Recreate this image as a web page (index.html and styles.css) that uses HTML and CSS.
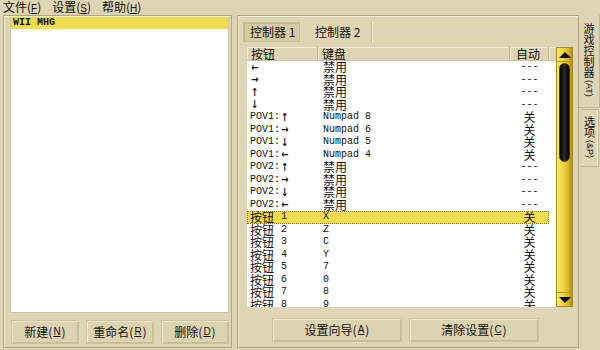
FILE: index.html
```html
<!DOCTYPE html>
<html lang="zh">
<head>
<meta charset="utf-8">
<title>控制器设置</title>
<link rel="stylesheet" href="styles.css">
</head>
<body>
<div class="app">
  <div class="menubar">
    <span class="menu">文件(<u>F</u>)</span>
    <span class="menu">设置(<u>S</u>)</span>
    <span class="menu">帮助(<u>H</u>)</span>
  </div>
  <div class="main">
    <div class="left">
      <div class="list">
        <div class="list-item sel">WII MHG</div>
      </div>
      <div class="btnrow left-btns">
        <div class="btn">新建(<u>N</u>)</div>
        <div class="btn">重命名(<u>R</u>)</div>
        <div class="btn">删除(<u>D</u>)</div>
      </div>
    </div>
    <div class="right">
      <div class="tabs">
        <div class="tab active">控制器 1</div>
        <div class="tab second">控制器 2</div>
      </div>
      <div class="grid-wrap">
        <div class="table">
          <div class="thead">
            <div class="th c1">按钮</div>
            <div class="th c2">键盘</div>
            <div class="th c3">自动</div>
            <div class="th c4"></div>
          </div>
          <div class="tbody">
            <div class="row"><span class="c1 m"><i class="ar">←</i></span><span class="c2">禁用</span><span class="c3 m">---</span></div>
            <div class="row"><span class="c1 m"><i class="ar">→</i></span><span class="c2">禁用</span><span class="c3 m">---</span></div>
            <div class="row"><span class="c1 m"><i class="ar">↑</i></span><span class="c2">禁用</span><span class="c3 m">---</span></div>
            <div class="row"><span class="c1 m"><i class="ar">↓</i></span><span class="c2">禁用</span><span class="c3 m">---</span></div>
            <div class="row"><span class="c1 m">POV1:<i class="ar">↑</i></span><span class="c2 m">Numpad 8</span><span class="c3">关</span></div>
            <div class="row"><span class="c1 m">POV1:<i class="ar">→</i></span><span class="c2 m">Numpad 6</span><span class="c3">关</span></div>
            <div class="row"><span class="c1 m">POV1:<i class="ar">↓</i></span><span class="c2 m">Numpad 5</span><span class="c3">关</span></div>
            <div class="row"><span class="c1 m">POV1:<i class="ar">←</i></span><span class="c2 m">Numpad 4</span><span class="c3">关</span></div>
            <div class="row"><span class="c1 m">POV2:<i class="ar">↑</i></span><span class="c2">禁用</span><span class="c3 m">---</span></div>
            <div class="row"><span class="c1 m">POV2:<i class="ar">→</i></span><span class="c2">禁用</span><span class="c3 m">---</span></div>
            <div class="row"><span class="c1 m">POV2:<i class="ar">↓</i></span><span class="c2">禁用</span><span class="c3 m">---</span></div>
            <div class="row"><span class="c1 m">POV2:<i class="ar">←</i></span><span class="c2">禁用</span><span class="c3 m">---</span></div>
            <div class="row sel"><span class="c1">按钮<i class="n">1</i></span><span class="c2 m">X</span><span class="c3">关</span></div>
            <div class="row"><span class="c1">按钮<i class="n">2</i></span><span class="c2 m">Z</span><span class="c3">关</span></div>
            <div class="row"><span class="c1">按钮<i class="n">3</i></span><span class="c2 m">C</span><span class="c3">关</span></div>
            <div class="row"><span class="c1">按钮<i class="n">4</i></span><span class="c2 m">Y</span><span class="c3">关</span></div>
            <div class="row"><span class="c1">按钮<i class="n">5</i></span><span class="c2 m">7</span><span class="c3">关</span></div>
            <div class="row"><span class="c1">按钮<i class="n">6</i></span><span class="c2 m">0</span><span class="c3">关</span></div>
            <div class="row"><span class="c1">按钮<i class="n">7</i></span><span class="c2 m">8</span><span class="c3">关</span></div>
            <div class="row"><span class="c1">按钮<i class="n">8</i></span><span class="c2 m">9</span><span class="c3">关</span></div>
          </div>
        </div>
        <div class="scrollbar">
          <div class="sb-btn"><span class="tri up"></span></div>
          <div class="sb-track">
            <div class="thumb"></div>
          </div>
          <div class="sb-btn"><span class="tri down"></span></div>
        </div>
      </div>
      <div class="btnrow right-btns">
        <div class="btn wide">设置向导(<u>A</u>)</div>
        <div class="btn wide">清除设置(<u>C</u>)</div>
      </div>
    </div>
    <div class="vtabs">
      <div class="vtab active"><span class="vt">游戏控制器<i class="vl">(AT)</i></span></div>
      <div class="vtab second"><span class="vt">选项<i class="vl">(&amp;P)</i></span></div>
    </div>
  </div>
</div>
</body>
</html>
```

FILE: styles.css
```css
* { box-sizing: border-box; }
html, body { margin: 0; padding: 0; }
body {
  width: 600px;
  height: 350px;
  overflow: hidden;
  background: #ddd5b3;
  font-family: "Noto Sans CJK SC", "DejaVu Sans", sans-serif;
  font-size: 12px;
  color: #111;
}
i { font-style: normal; }
u { text-decoration: underline; }
.app { width: 600px; height: 350px; display: flex; flex-direction: column; }

.menubar {
  height: 15px;
  display: flex;
  align-items: center;
  gap: 11px;
  padding-left: 3px;
  line-height: 15px;
  font-size: 12px;
}
.menu { white-space: nowrap; }
.menu u { font-family: "Liberation Sans", sans-serif; font-size: 10px; }

.main { flex: 1; display: flex; padding-left: 3px; padding-bottom: 2px; }

.left {
  width: 229px;
  border: 1px solid #b3a67c;
  box-shadow: inset 1px 1px 0 #f3eed8;
  display: flex;
  flex-direction: column;
  padding: 1px 2px 0 6px;
}
.list {
  height: 296px;
  background: #fff;
  border: 1px solid #cfc6a0;
  border-top: 0;
}
.list-item {
  height: 12px;
  line-height: 12px;
  padding-left: 2px;
  font-family: "Liberation Mono", monospace;
  font-size: 10px;
  font-weight: bold;
}
.list-item.sel { background: #f1db4f; }

.btnrow { display: flex; }
.left-btns { margin-top: 7px; gap: 7px; padding-left: 1px; }
.btn {
  height: 24px;
  display: flex;
  align-items: center;
  justify-content: center;
  line-height: 1;
  border: 1px solid #cdc39c;
  box-shadow: inset 1px 1px 0 #ece6cd, inset -1px -1px 0 #c8be96;
  background: #dcd4b0;
  font-size: 12px;
  width: 69px;
  white-space: nowrap;
}
.btn u { font-family: "Liberation Sans", sans-serif; font-size: 10px; margin: 0 1px; }
.btn.wide { width: 130px; }

.right {
  width: 342px;
  margin-left: 5px;
  border: 1px solid #b3a67c;
  box-shadow: inset 1px 1px 0 #f3eed8;
  display: flex;
  flex-direction: column;
  padding: 6px 0 0 5px;
}
.tabs { display: flex; height: 20px; }
.tab {
  display: flex;
  align-items: center;
  line-height: 1;
  font-size: 12px;
  white-space: nowrap;
}
.tab.active {
  width: 57px;
  padding-left: 6px;
  background: #d5cca6;
  border: 1px solid #c9bf96;
  box-shadow: inset 1px 1px 0 #bfb48a;
}
.tab.second {
  width: 72px;
  padding-left: 15px;
  border-right: 1px solid #c4b98e;
  box-shadow: 1px 0 0 #f1ecd6;
}

.grid-wrap {
  margin-top: 5px;
  margin-left: 4px;
  display: flex;
  height: 260px;
}
.table { width: 309px; display: flex; flex-direction: column; }
.thead {
  height: 14px;
  display: grid;
  grid-template-columns: 71px 192px 39px 7px;
  background: #ddd5b3;
}
.th {
  display: flex;
  align-items: center;
  line-height: 1;
  font-size: 12px;
  border-right: 1px solid #bdb189;
  border-bottom: 1px solid #cfc6a0;
  box-shadow: inset 1px 1px 0 #f1ecd6;
}
.th.c1 { padding-left: 4px; }
.th.c2 { padding-left: 4px; }
.th.c3 { padding-left: 6px; }
.th.c4 { border-right: 0; }
.tbody {
  flex: 1;
  background: #fff;
  overflow: hidden;
}
.row {
  height: 12.5px;
  display: grid;
  grid-template-columns: 71px 192px 39px;
  width: 302px;
  white-space: nowrap;
}
.row > span {
  display: flex;
  align-items: center;
  height: 12.5px;
  line-height: 1;
  white-space: pre;
}
.row.sel {
  background: #f1db4f;
  outline: 1px dotted #8c7a22;
  outline-offset: -1px;
}
.c1 { padding-left: 3px; }
.c2 { padding-left: 5px; }
.row .c3 { justify-content: center; }
.m {
  font-family: "Liberation Mono", "DejaVu Sans Mono", monospace;
  font-size: 10px;
}
.ar {
  font-family: "DejaVu Sans", sans-serif;
  font-size: 11px;
  display: inline-block;
  width: 9px;
  text-align: center;
  transform: scaleX(0.8);
  font-weight: bold;
}
.n {
  font-family: "Liberation Mono", monospace;
  font-size: 10px;
  margin-left: 7px;
}

.scrollbar {
  width: 17px;
  display: flex;
  flex-direction: column;
  border: 1px solid #a88a1e;
  background: linear-gradient(to right, #f7e56e 0%, #f0d23c 45%, #d8b42a 75%, #b38e1c 100%);
}
.sb-btn {
  height: 14px;
  display: flex;
  align-items: center;
  justify-content: center;
  border-bottom: 1px solid #b8981f;
}
.sb-btn:last-child { border-bottom: 0; border-top: 1px solid #b8981f; }
.tri { width: 0; height: 0; border-left: 6px solid transparent; border-right: 6px solid transparent; }
.tri.up { border-bottom: 6px solid #111; }
.tri.down { border-top: 6px solid #111; }
.sb-track { flex: 1; padding: 1px 2px 0 2px; }
.thumb {
  height: 99px;
  border-radius: 6px;
  background: linear-gradient(to right, #000 0%, #2a2a2a 50%, #000 100%);
  border: 1px solid #4a3c08;
}

.right-btns { margin-top: 11px; gap: 7px; padding-left: 29px; }

.vtabs {
  width: 21px;
  display: flex;
  flex-direction: column;
}
.vtab {
  writing-mode: vertical-rl;
  display: flex;
  align-items: center;
  white-space: nowrap;
  border: 1px solid #c4b98e;
  border-left: 0;
}
.vt {
  font-size: 11px;
  line-height: 12px;
}
.vl {
  font-family: "Liberation Sans", sans-serif;
  font-size: 9px;
  margin-top: 2px;
}
.vtab.active { height: 93px; border-top: 0; padding-top: 8px; }
.vtab.second { height: 58px; margin-top: 1px; margin-left: 2px; margin-right: 1px; padding-top: 6px; box-shadow: inset -1px 0 0 #f1ecd6; }
```
